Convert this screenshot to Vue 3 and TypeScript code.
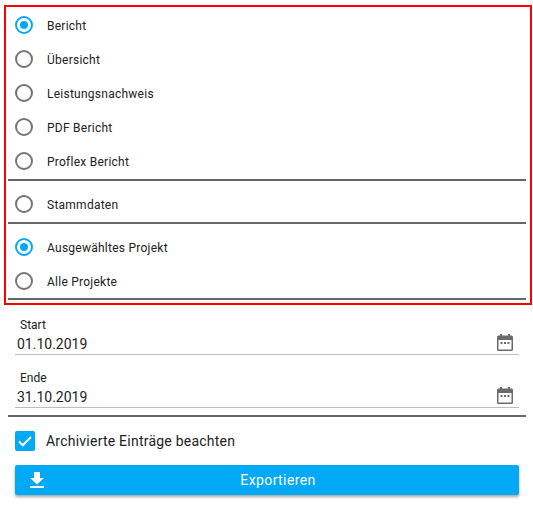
<template>
  <div class="page">
    <div class="selection">
      <template v-for="(group, i) in groups" :key="i">
        <label v-for="opt in group.options" :key="opt" class="radio-row">
          <span class="radio" :class="{ checked: group.selected === opt }"></span>
          <span class="radio-label">{{ opt }}</span>
        </label>
        <hr class="divider" />
      </template>
    </div>

    <div class="date-field" v-for="d in dates" :key="d.label">
      <div class="date-label">{{ d.label }}</div>
      <div class="date-input">
        <span class="date-value">{{ d.value }}</span>
        <svg class="cal" viewBox="0 0 16 17" width="16" height="17">
          <path fill="#6b6b6b" d="M3 0h2v1.500h6V0h2v1.500h1.500A1.500 1.500 0 0 1 16 3v12.500a1.500 1.500 0 0 1-1.500 1.500h-13A1.500 1.500 0 0 1 0 15.500V3a1.500 1.500 0 0 1 1.500-1.500H3z" />
          <rect x="1.500" y="6" width="13" height="9.500" fill="#fff" />
          <rect x="3.500" y="8" width="2" height="2" fill="#6b6b6b" />
          <rect x="7" y="8" width="2" height="2" fill="#6b6b6b" />
          <rect x="10.500" y="8" width="2" height="2" fill="#6b6b6b" />
        </svg>
      </div>
    </div>

    <hr class="divider lower" />

    <label class="check-row">
      <span class="check">
        <svg viewBox="0 0 20 20" width="20" height="20">
          <path d="M4 10.500l3.800 3.800 8.200-8.300" fill="none" stroke="#fff" stroke-width="2" />
        </svg>
      </span>
      <span class="check-label">Archivierte Einträge beachten</span>
    </label>

    <button class="export">
      <svg class="export-icon" viewBox="0 0 14 16" width="14" height="16">
        <path fill="#fff" d="M4 0h6v6h4l-7 6.500L0 6h4zM0 14h14v2H0z" />
      </svg>
      <span>Exportieren</span>
    </button>
  </div>
</template>

<script setup lang="ts">
const groups = [
  {
    selected: 'Bericht',
    options: ['Bericht', 'Übersicht', 'Leistungsnachweis', 'PDF Bericht', 'Proflex Bericht'],
  },
  { selected: '', options: ['Stammdaten'] },
  { selected: 'Ausgewähltes Projekt', options: ['Ausgewähltes Projekt', 'Alle Projekte'] },
]

const dates = [
  { label: 'Start', value: '01.10.2019' },
  { label: 'Ende', value: '31.10.2019' },
]
</script>

<style scoped>
.page {
  width: 533px;
  height: 512px;
  overflow: hidden;
  background: #fff;
  font-family: Roboto, "Liberation Sans", sans-serif;
  color: #212121;
  padding-top: 5px;
  box-sizing: border-box;
}
.selection {
  margin-left: 4px;
  width: 528px;
  box-sizing: border-box;
  border: 2px solid #f00;
  padding: 1px 4px 3px 2px;
}
.radio-row {
  display: flex;
  align-items: center;
  height: 34px;
  padding-left: 7px;
}
.radio {
  width: 18px;
  height: 18px;
  box-sizing: border-box;
  border: 2px solid #757575;
  border-radius: 50%;
  display: flex;
  align-items: center;
  justify-content: center;
}
.radio.checked {
  border-color: #02a9f7;
}
.radio.checked::after {
  content: "";
  width: 8px;
  height: 8px;
  border-radius: 50%;
  background: #02a9f7;
}
.radio-label {
  margin-left: 14px;
  padding-top: 2px;
  font-size: 12px;
  letter-spacing: 0.25px;
}
.divider {
  margin: 1px 0 6px;
  border: none;
  height: 2px;
  background: #666;
}
.selection .divider:last-child {
  margin: 0;
}
.date-field {
  margin: 0 14px 0 15px;
  height: 53px;
  box-sizing: border-box;
}
.date-label {
  padding: 13px 0 0 5px;
  font-size: 12px;
  line-height: 14px;
}
.date-input {
  display: flex;
  align-items: center;
  justify-content: space-between;
  height: 22px;
  border-bottom: 1px solid #bdbdbd;
  padding: 0 6px 0 2px;
}
.date-value {
  padding-top: 2px;
  font-size: 14px;
}
.cal {
  margin-top: -2px;
}
.lower {
  margin: 4px 7px 0 8px;
}
.check-row {
  display: flex;
  align-items: center;
  margin: 14px 0 0 15px;
  height: 20px;
}
.check {
  width: 20px;
  height: 20px;
  border-radius: 2px;
  background: #02a9f7;
  display: block;
}
.check svg {
  display: block;
}
.check-label {
  margin-left: 11px;
  padding-bottom: 1px;
  font-size: 14px;
  letter-spacing: 0.23px;
}
.export {
  position: relative;
  display: flex;
  align-items: center;
  justify-content: center;
  margin: 14px 0 0 15px;
  width: 504px;
  height: 30px;
  padding: 0 0 0 22px;
  border: none;
  border-radius: 2px;
  background: #02a9f7;
  color: #fff;
  font: 400 14px Roboto, "Liberation Sans", sans-serif;
  letter-spacing: 0.4px;
  box-shadow: 0 2px 3px rgba(0, 0, 0, 0.35);
}
.export-icon {
  position: absolute;
  left: 15px;
  top: 7px;
}
</style>
